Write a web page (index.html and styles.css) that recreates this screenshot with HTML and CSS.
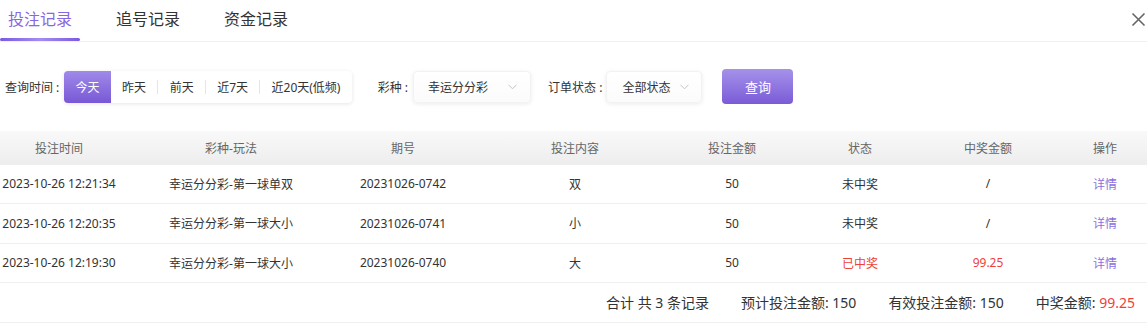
FILE: index.html
```html
<!DOCTYPE html>
<html lang="zh-CN">
<head>
<meta charset="utf-8">
<link rel="stylesheet" href="styles.css">
</head>
<body>
<div class="page">
  <div class="tabs">
    <div class="tab active">投注记录</div>
    <div class="tab">追号记录</div>
    <div class="tab">资金记录</div>
    <div class="close">
      <svg width="15" height="15" viewBox="0 0 15 15"><path d="M1.5 1.5 L13.5 13.5 M13.5 1.5 L1.5 13.5" stroke="#666" stroke-width="1.6" fill="none"/></svg>
    </div>
  </div>

  <div class="filter">
    <span class="label">查询时间 :</span>
    <div class="seg-group">
      <span class="seg active">今天</span>
      <span class="seg">昨天</span>
      <span class="sep"></span>
      <span class="seg">前天</span>
      <span class="sep"></span>
      <span class="seg">近7天</span>
      <span class="sep"></span>
      <span class="seg">近20天(低频)</span>
    </div>
    <span class="label label-gap">彩种 :</span>
    <div class="select select-lottery">
      <span>幸运分分彩</span>
      <svg class="chev" width="9" height="6" viewBox="0 0 9 6"><path d="M0.5 0.8 L4.5 4.8 L8.5 0.8" stroke="#c4c4c4" stroke-width="1" fill="none"/></svg>
    </div>
    <span class="label label-gap2">订单状态 :</span>
    <div class="select select-status">
      <span>全部状态</span>
      <svg class="chev" width="9" height="6" viewBox="0 0 9 6"><path d="M0.5 0.8 L4.5 4.8 L8.5 0.8" stroke="#c4c4c4" stroke-width="1" fill="none"/></svg>
    </div>
    <button class="search">查询</button>
  </div>

  <div class="table">
    <div class="row head">
      <div>投注时间</div><div>彩种-玩法</div><div>期号</div><div>投注内容</div><div>投注金额</div><div>状态</div><div>中奖金额</div><div>操作</div>
    </div>
    <div class="row">
      <div>2023-10-26 12:21:34</div><div>幸运分分彩-第一球单双</div><div>20231026-0742</div><div>双</div><div>50</div><div>未中奖</div><div>/</div><div class="link">详情</div>
    </div>
    <div class="row">
      <div>2023-10-26 12:20:35</div><div>幸运分分彩-第一球大小</div><div>20231026-0741</div><div>小</div><div>50</div><div>未中奖</div><div>/</div><div class="link">详情</div>
    </div>
    <div class="row">
      <div>2023-10-26 12:19:30</div><div>幸运分分彩-第一球大小</div><div>20231026-0740</div><div>大</div><div>50</div><div class="red">已中奖</div><div class="red">99.25</div><div class="link">详情</div>
    </div>
    <div class="summary">
      <span>合计 共 3 条记录</span>
      <span>预计投注金额: 150</span>
      <span>有效投注金额: 150</span>
      <span>中奖金额: <em class="red">99.25</em></span>
    </div>
  </div>
</div>
</body>
</html>
```

FILE: styles.css
```css
* { box-sizing: border-box; }
html, body { margin: 0; padding: 0; background: #fff; }
body {
  font-family: "Noto Sans", "Noto Sans CJK SC", sans-serif;
  color: #333;
  font-size: 12px;
}
.page { width: 1147px; }

.tabs {
  display: flex;
  gap: 28px;
  height: 42px;
  border-bottom: 1px solid #f0f0f0;
}
.tab {
  width: 80px;
  display: flex;
  flex-direction: column;
  align-items: stretch;
  text-align: center;
  font-size: 16px;
  line-height: 38px;
  height: 41px;
  color: #333;
}
.tab.active { color: #8868e0; }
.tab.active::after {
  content: "";
  display: block;
  height: 3px;
  border-radius: 2px;
  background: linear-gradient(90deg, #7a5ae0 0%, #a48cf2 50%, #7a5ae0 100%);
}
.close {
  margin-left: auto;
  margin-top: 12px;
  margin-right: 1px;
  width: 15px;
  height: 15px;
}
.close svg { display: block; }

.filter {
  display: flex;
  align-items: center;
  padding: 27px 0 27px 5px;
  height: 89px;
}
.label { color: #333; white-space: nowrap; }
.filter > .label:first-child { margin-right: 5px; }
.label-gap { margin-left: 26px; margin-right: 5px; }
.label-gap2 { margin-left: 17px; margin-right: 4px; }

.seg-group {
  display: flex;
  align-items: center;
  height: 32px;
  border-radius: 4px;
  background: #fff;
  box-shadow: 0 1px 4px rgba(0,0,0,0.1);
  overflow: hidden;
}
.seg {
  height: 100%;
  display: flex;
  align-items: center;
  padding: 0 11.25px;
  color: #333;
  white-space: nowrap;
}
.seg.active {
  color: #fff;
  background: linear-gradient(180deg, #a08ae9 0%, #7858d6 100%);
}
.sep {
  width: 1px;
  height: 14px;
  background: #e6e6e6;
}

.select {
  height: 32px;
  display: flex;
  align-items: center;
  justify-content: space-between;
  border-radius: 4px;
  border: 1px solid #f2f2f2;
  background: linear-gradient(180deg, #ffffff 0%, #fbfbfb 100%);
  box-shadow: 0 1px 4px rgba(0,0,0,0.08);
  color: #333;
}
.select-lottery { width: 118px; padding: 0 13px 0 14px; }
.select-status { width: 96px; padding: 0 12px 0 15px; }
.chev { display: block; }

.search {
  margin-left: 20px;
  width: 71px;
  height: 35px;
  border: none;
  border-radius: 4px;
  background: linear-gradient(180deg, #a592e9 0%, #7a5bd7 100%);
  color: #fff;
  font-family: inherit;
  font-size: 13px;
  padding: 0;
}

.row {
  display: grid;
  grid-template-columns: 118px 226px 118px 226px 88px 168px 88px 115px;
  align-items: center;
  height: 39.5px;
  border-bottom: 1px solid #f0f0f0;
  text-align: center;
  white-space: nowrap;
}
.row > :last-child { padding-left: 31px; }
.row.head {
  height: 33.5px;
  border-bottom: none;
  color: #666;
  background: linear-gradient(180deg, #f9f9f9 0%, #ededed 100%);
}
.link { color: #8a70e0; }
.red { color: #f0403a; }

.summary {
  display: flex;
  justify-content: flex-end;
  align-items: center;
  gap: 32px;
  height: 39.5px;
  padding-right: 12px;
  font-size: 14px;
  color: #333;
  border-bottom: 1px solid #f0f0f0;
}
.summary em { font-style: normal; }
```
